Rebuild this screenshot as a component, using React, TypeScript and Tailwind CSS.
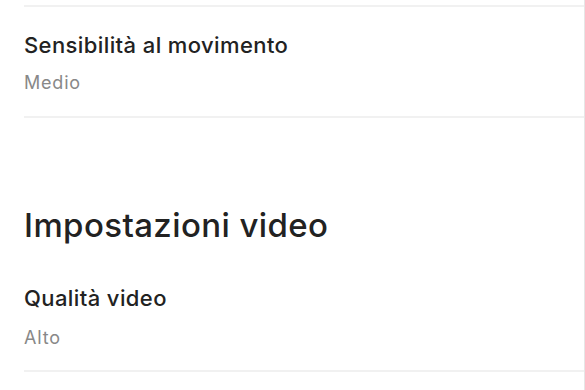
export default function App() {
  return (
    <div className="h-[390px] w-[585px] overflow-hidden border-r border-[#e6e6e6] bg-white font-['Inter',sans-serif] text-[#222]">
      <div className="pl-6">
        <div className="h-[7px] border-b-2 border-[#f1f1f1]" />
        <div className="border-b-2 border-[#f1f1f1] pb-[21px] pt-[24px]">
          <p className="text-[22px] font-medium leading-[28px] tracking-[0.4px]">Sensibilità al movimento</p>
          <p className="mt-[12px] text-[18px] leading-[24px] tracking-[0.8px] text-[#888]">Medio</p>
        </div>
        <h2 className="mt-[87px] text-[33px] font-medium leading-[40px] tracking-[0.4px]">Impostazioni video</h2>
        <div className="border-b-2 border-[#f1f1f1] pb-[20px] pt-[39px]">
          <p className="text-[22px] font-medium leading-[28px] tracking-[0.4px]">Qualità video</p>
          <p className="mt-[14px] text-[18px] leading-[24px] tracking-[0.8px] text-[#888]">Alto</p>
        </div>
      </div>
    </div>
  );
}
